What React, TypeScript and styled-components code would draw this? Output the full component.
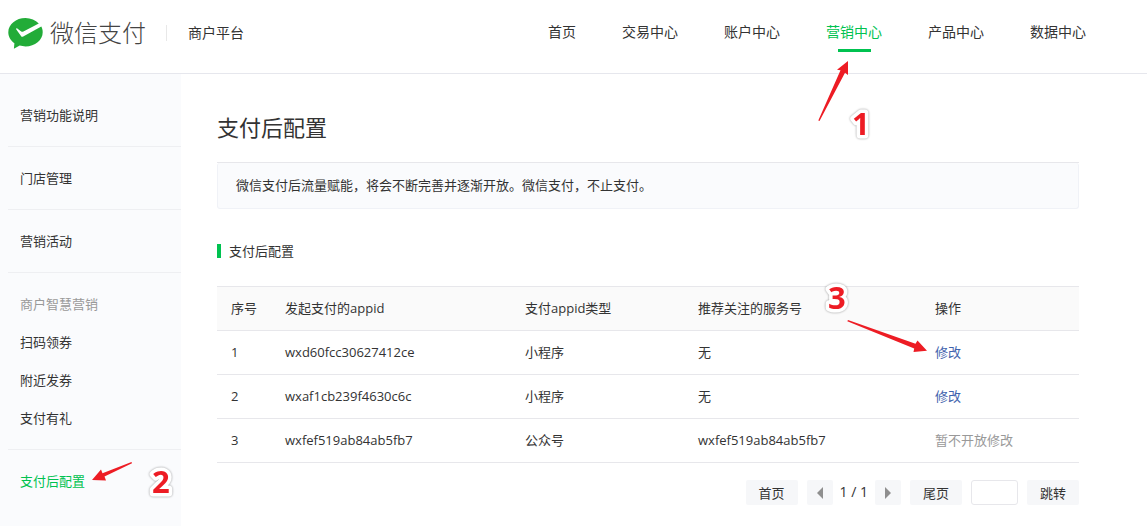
import React from 'react';
import styled, { createGlobalStyle } from 'styled-components';

const GlobalStyle = createGlobalStyle`
  *, *::before, *::after { box-sizing: border-box; }
  body {
    margin: 0;
    background: #fff;
    color: #333;
    font-family: "Open Sans", "Noto Sans CJK SC", sans-serif;
    font-size: 13px;
    line-height: 20px;
  }
  a { color: inherit; text-decoration: none; }
  ul { list-style: none; margin: 0; padding: 0; }
  button, input { font: inherit; color: inherit; }
`;

const Page = styled.div`
  position: relative;
  display: flex;
  flex-direction: column;
  min-height: 100vh;
`;

const Header = styled.header`
  display: flex;
  align-items: center;
  justify-content: space-between;
  height: 74px;
  padding: 0 61px 8px 8px;
  border-bottom: 1px solid #e6e7ed;
`;

const Brand = styled.div`
  display: flex;
  align-items: center;
`;

const BrandLink = styled.a`
  display: flex;
  align-items: center;
  gap: 6px;
`;

const BrandName = styled.span`
  color: #444;
  font-size: 24px;
  font-weight: 300;
  line-height: 32px;
`;

const Platform = styled.span`
  display: flex;
  align-items: center;
  gap: 21px;
  margin-left: 20px;
  font-size: 14px;

  &::before {
    content: "";
    width: 1px;
    height: 16px;
    background: #e8e8e8;
  }
`;

const Nav = styled.nav`
  display: flex;
  gap: 46px;
  padding-bottom: 2px;
`;

const NavLink = styled.a<{ $active?: boolean }>`
  position: relative;
  font-size: 14px;
  color: ${(p) => (p.$active ? '#00c250' : '#333')};

  &::after {
    content: "";
    display: ${(p) => (p.$active ? 'block' : 'none')};
    position: absolute;
    left: 12px;
    right: 11px;
    top: 27px;
    height: 3px;
    background: #00c250;
  }
`;

const Body = styled.div`
  display: flex;
  flex: 1;
`;

const Sidebar = styled.nav`
  flex: none;
  width: 181px;
  padding: 10px 0 12px 8px;
  background: #fafbfd;
`;

const MenuGroup = styled.ul`
  padding: 12px;

  & + & { border-top: 1px solid #eeeff2; }
`;

const MenuItem = styled.li<{ $tone?: 'muted' | 'active' }>`
  line-height: 38px;
  color: ${(p) => (p.$tone === 'muted' ? '#999' : p.$tone === 'active' ? '#00c250' : '#333')};
`;

const Main = styled.main`
  flex: 1;
  min-width: 0;
  padding: 36px 68px 20px 36px;
`;

const Title = styled.h1`
  margin: 0;
  padding-bottom: 18px;
  border-bottom: 1px solid #e7e7eb;
  font-size: 22px;
  font-weight: 400;
  line-height: 34px;
`;

const Notice = styled.p`
  margin: 0;
  padding: 12px 18px;
  border: 1px solid #f0f2f7;
  border-top: 0;
  border-radius: 3px;
  background: #fafbfd;
  line-height: 21px;
`;

const SectionTitle = styled.h2`
  display: flex;
  align-items: center;
  gap: 8px;
  margin: 32px 0 25px;
  font-size: 13px;
  font-weight: 400;
  line-height: 20px;

  &::before {
    content: "";
    width: 4px;
    height: 14px;
    background: #00c250;
  }
`;

const Table = styled.table`
  width: 100%;
  table-layout: fixed;
  border-collapse: collapse;
  border-top: 1px solid #e7e7eb;
`;

const Row = styled.tr`
  border-bottom: 1px solid #e7e7eb;
`;

const HeadCell = styled.th<{ $width: number }>`
  width: ${(p) => p.$width}px;
  height: 44px;
  padding: 0 14px 2px;
  background: #fafafa;
  font-weight: 400;
  text-align: left;
`;

const Cell = styled.td`
  height: 44px;
  padding: 0 14px 2px;
`;

const EditLink = styled.a`
  color: #3f62ad;
`;

const Muted = styled.span`
  color: #999;
`;

const Pager = styled.div`
  display: flex;
  justify-content: flex-end;
  gap: 9px;
  margin-top: 17px;
`;

const PagerButton = styled.button<{ $narrow?: boolean }>`
  display: flex;
  align-items: center;
  justify-content: center;
  width: ${(p) => (p.$narrow ? 26 : 52)}px;
  height: 25px;
  padding: 0;
  border: 0;
  border-radius: 2px;
  background: #f6f7f9;
  cursor: pointer;
`;

const PageCount = styled.span`
  margin: 0 -2px;
  font-size: 14px;
  line-height: 23px;
`;

const PageInput = styled.input`
  width: 47px;
  height: 25px;
  padding: 0 6px;
  border: 1px solid #e7e7eb;
  border-radius: 3px;
  background: #fff;
`;

const Annotations = styled.svg`
  position: absolute;
  left: 0;
  top: 0;
  pointer-events: none;
`;

const Digit = styled.text`
  font-size: 31px;
  font-weight: 700;
  stroke: #fff;
  stroke-width: 7px;
  stroke-linejoin: round;
  paint-order: stroke;
  filter: drop-shadow(0 0 1px rgba(0, 0, 0, 0.4));
`;

const navItems = ['首页', '交易中心', '账户中心', '营销中心', '产品中心', '数据中心'];

type Item = { label: string; tone?: 'muted' | 'active' };

const menu: Item[][] = [
  [{ label: '营销功能说明' }],
  [{ label: '门店管理' }],
  [{ label: '营销活动' }],
  [
    { label: '商户智慧营销', tone: 'muted' },
    { label: '扫码领券' },
    { label: '附近发券' },
    { label: '支付有礼' },
  ],
  [{ label: '支付后配置', tone: 'active' }],
];

const columns = [
  { label: '序号', width: 54 },
  { label: '发起支付的appid', width: 240 },
  { label: '支付appid类型', width: 173 },
  { label: '推荐关注的服务号', width: 237 },
  { label: '操作', width: 158 },
];

const rows = [
  { appid: 'wxd60fcc30627412ce', type: '小程序', service: '无', editable: true },
  { appid: 'wxaf1cb239f4630c6c', type: '小程序', service: '无', editable: true },
  { appid: 'wxfef519ab84ab5fb7', type: '公众号', service: 'wxfef519ab84ab5fb7', editable: false },
];

const Logo = () => (
  <svg width="36" height="32" viewBox="0 0 36 32" aria-hidden="true">
    <path
      fill="#22ac38"
      d="M17.500 1C8 1 .3 7.300.3 15.200c0 4.500 2.400 8.400 6.100 11L5.900 31.800l5.800-3.200c1.800.5 3.800.8 5.800.8 9.500 0 17.200-6.300 17.200-14.200 0-2-.5-3.900-1.400-5.600L15.200 19.600c-1 .5-1.700.3-2.200-.6L8.300 12.600c-.4-1 .2-1.500 1-1.100l3.900 2.900c.7.400 1.400.5 2.200.2L30.800 6.500C27.500 3.100 22.800 1 17.500 1z"
    />
  </svg>
);

export default function App() {
  return (
    <Page>
      <GlobalStyle />
      <Header>
        <Brand>
          <BrandLink href="#">
            <Logo />
            <BrandName>微信支付</BrandName>
          </BrandLink>
          <Platform>商户平台</Platform>
        </Brand>
        <Nav>
          {navItems.map((label) => (
            <NavLink key={label} href="#" $active={label === '营销中心'}>{label}</NavLink>
          ))}
        </Nav>
      </Header>
      <Body>
        <Sidebar>
          {menu.map((group) => (
            <MenuGroup key={group[0].label}>
              {group.map((item) => (
                <MenuItem key={item.label} $tone={item.tone}>
                  {item.tone === 'muted' ? item.label : <a href="#">{item.label}</a>}
                </MenuItem>
              ))}
            </MenuGroup>
          ))}
        </Sidebar>
        <Main>
          <Title>支付后配置</Title>
          <Notice>微信支付后流量赋能，将会不断完善并逐渐开放。微信支付，不止支付。</Notice>
          <SectionTitle>支付后配置</SectionTitle>
          <Table>
            <thead>
              <Row>
                {columns.map((c) => (
                  <HeadCell key={c.label} $width={c.width}>{c.label}</HeadCell>
                ))}
              </Row>
            </thead>
            <tbody>
              {rows.map((r, i) => (
                <Row key={r.appid}>
                  <Cell>{i + 1}</Cell>
                  <Cell>{r.appid}</Cell>
                  <Cell>{r.type}</Cell>
                  <Cell>{r.service}</Cell>
                  <Cell>{r.editable ? <EditLink href="#">修改</EditLink> : <Muted>暂不开放修改</Muted>}</Cell>
                </Row>
              ))}
            </tbody>
          </Table>
          <Pager>
            <PagerButton>首页</PagerButton>
            <PagerButton $narrow aria-label="上一页">
              <svg width="6" height="12" viewBox="0 0 6 12"><path fill="#8f8f8f" d="M6 0v12L0 6z" /></svg>
            </PagerButton>
            <PageCount>1 / 1</PageCount>
            <PagerButton $narrow aria-label="下一页">
              <svg width="6" height="12" viewBox="0 0 6 12"><path fill="#8f8f8f" d="M0 0v12l6-6z" /></svg>
            </PagerButton>
            <PagerButton>尾页</PagerButton>
            <PageInput aria-label="页码" />
            <PagerButton>跳转</PagerButton>
          </Pager>
        </Main>
      </Body>
      <Annotations width="1100" height="510" viewBox="0 0 1100 510">
        <g fill="#ed1c24">
          <path d="M848 61V75L845 72.700 819.500 121 818.300 120.400 840.500 70.300 837 69.700z" />
          <path d="M92 480L101 469.500 102.500 473.200 131.500 462 132 463.200 104.500 476.500 106 480.500z" />
          <path d="M848 320L915.500 343.800 917.500 340.500 927 350.800 913.500 352 914.200 348.500 847.300 321.200z" />
          <Digit x="852" y="135">1</Digit>
          <Digit x="152" y="493">2</Digit>
          <Digit x="828" y="309">3</Digit>
        </g>
      </Annotations>
    </Page>
  );
}
